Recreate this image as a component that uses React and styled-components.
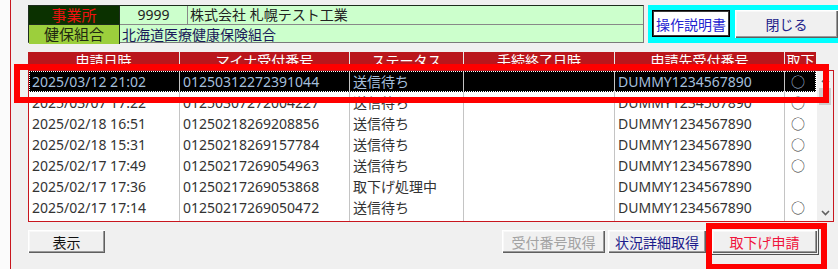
import React from "react";
import styled, { createGlobalStyle } from "styled-components";

const Global = createGlobalStyle`
  html, body { margin: 0; padding: 0; background: #f0f0f0; }
  * { box-sizing: border-box; }
`;

const FONT = `"Noto Sans", "Noto Sans CJK JP", sans-serif`;

const Root = styled.div`
  position: relative;
  width: 838px;
  height: 269px;
  overflow: hidden;
  display: flex;
  font-family: ${FONT};
  font-size: 14px;
`;

const Gutter = styled.div`
  width: 10px;
  background: #fbfbfb;
  flex: none;
`;

const Main = styled.div`
  flex: 1;
  border-left: 1px solid #c8161e;
  background: #f0f0f0;
  padding: 5px 0 0 17px;
  display: flex;
  flex-direction: column;
`;

const TopRow = styled.div`
  display: flex;
  height: 38px;
  gap: 4px;
`;

const InfoGrid = styled.div`
  width: 616px;
  display: grid;
  grid-template-columns: 91px 68px 1fr;
  grid-template-rows: 19px 19px;
  border: 1px solid #7a7a7a;
  border-left-color: #1d2d1d;
  border-top-color: #1d2d1d;
  background: #ccffcc;
`;

const Label = styled.div`
  background: ${(p) => p.$bg};
  color: ${(p) => p.$fg};
  border: 1px solid #1d2d1d;
  border-width: ${(p) => (p.$last ? "0 1px 0 0" : "0 1px 1px 0")};
  display: flex;
  align-items: center;
  justify-content: center;
  line-height: 1;
  font-size: 15px;
`;

const Cell = styled.div`
  color: ${(p) => p.$fg || "#222"};
  border-right: ${(p) => (p.$divider ? "1px solid #888" : "0")};
  border-bottom: ${(p) => (p.$bottom ? "1px solid #888" : "0")};
  display: flex;
  align-items: center;
  justify-content: ${(p) => (p.$center ? "center" : "flex-start")};
  padding-left: ${(p) => (p.$center ? "0" : "2px")};
  grid-column: ${(p) => p.$span || "auto"};
  line-height: 1;
  white-space: nowrap;
`;

const HelpPanel = styled.div`
  flex: 1;
  background: #00ffff;
  display: flex;
  align-items: flex-start;
  padding: 5px 0 0 4px;
  gap: 5px;
`;

const ManualButton = styled.div`
  width: 78px;
  height: 27px;
  background: #fff;
  border: 1px solid #000;
  box-shadow: inset 0 0 0 1px #3a3a3a;
  color: #2323d0;
  display: flex;
  align-items: center;
  justify-content: center;
  font-size: 14px;
`;

const Button3D = styled.div`
  width: ${(p) => p.$w}px;
  height: ${(p) => p.$h || 23}px;
  background: #f0f0f0;
  color: ${(p) => p.$fg || "#111"};
  display: flex;
  align-items: center;
  justify-content: center;
  font-size: 14px;
  box-shadow: inset 1px 1px 0 #ffffff, inset -1px -1px 0 #5f5f5f,
    inset -2px -2px 0 #9a9a9a, inset 2px 2px 0 #f8f8f8;
  margin-left: ${(p) => p.$ml || 0}px;
  outline: ${(p) => (p.$focus ? "1px solid #505050" : "none")};
  outline-offset: 1px;
  white-space: nowrap;
`;

const HeaderBar = styled.div`
  margin-top: 9px;
  width: 788px;
  height: 18px;
  background: #ba161c;
  display: flex;
`;

const HeadCell = styled.div`
  width: ${(p) => p.$w}px;
  flex: none;
  color: #fff;
  text-align: center;
  line-height: 18px;
  border-left: ${(p) => (p.$first ? "0" : "1px solid #e8e8e8")};
  white-space: nowrap;
  overflow: hidden;
`;

const ListBox = styled.div`
  width: 806px;
  height: 152px;
  border: 1px solid #c8161e;
  background: #fff;
  display: flex;
  overflow: hidden;
`;

const Rows = styled.div`
  width: 787px;
  flex: none;
  display: flex;
  flex-direction: column;
`;

const Row = styled.div`
  display: flex;
  height: 21px;
  flex: none;
  background: ${(p) => (p.$sel ? "#000" : "#fff")};
  color: ${(p) => (p.$sel ? "#a4bfdc" : "#333")};
  outline: ${(p) => (p.$sel ? "1px dotted #fff" : "none")};
  outline-offset: -1px;
`;

const RowCell = styled.div`
  width: ${(p) => p.$w}px;
  flex: none;
  border-left: ${(p) => (p.$first ? "0" : "1px solid #c4c4c4")};
  padding-left: ${(p) => (p.$mark ? 6 : 3)}px;
  line-height: 21px;
  white-space: nowrap;
  overflow: hidden;
`;

const ScrollBar = styled.div`
  width: 17px;
  flex: none;
  background: #f0f0f0;
  display: flex;
  flex-direction: column;
  justify-content: space-between;
  border-left: 1px solid #fff;
`;

const ScrollArrow = styled.div`
  height: 17px;
  display: flex;
  align-items: center;
  justify-content: center;
`;

const Thumb = styled.div`
  height: 17px;
  margin: 0 2px;
  background: #cdcdcd;
`;

const ScrollTrack = styled.div`
  flex: 1;
  display: flex;
  flex-direction: column;
`;

const ButtonBar = styled.div`
  margin-top: 8px;
  width: 806px;
  padding-right: 17px;
  display: flex;
  align-items: center;
`;

const Spacer = styled.div`
  flex: 1;
`;

const Mark = styled.div`
  position: absolute;
  left: ${(p) => p.$x}px;
  top: ${(p) => p.$y}px;
  width: ${(p) => p.$w}px;
  height: ${(p) => p.$h}px;
  border: 6px solid #ff0000;
  pointer-events: none;
`;

const COLS = [
  { t: "申請日時", w: 150 },
  { t: "マイナ受付番号", w: 170 },
  { t: "ステータス", w: 114 },
  { t: "手続終了日時", w: 151 },
  { t: "申請先受付番号", w: 170 },
  { t: "取下", w: 32 },
];

const DATA = [
  ["2025/03/12 21:02", "01250312272391044", "送信待ち", "", "DUMMY1234567890", "○"],
  ["2025/03/07 17:22", "01250307272004227", "送信待ち", "", "DUMMY1234567890", "○"],
  ["2025/02/18 16:51", "01250218269208856", "送信待ち", "", "DUMMY1234567890", "○"],
  ["2025/02/18 15:31", "01250218269157784", "送信待ち", "", "DUMMY1234567890", "○"],
  ["2025/02/17 17:49", "01250217269054963", "送信待ち", "", "DUMMY1234567890", "○"],
  ["2025/02/17 17:36", "01250217269053868", "取下げ処理中", "", "DUMMY1234567890", ""],
  ["2025/02/17 17:14", "01250217269050472", "送信待ち", "", "DUMMY1234567890", "○"],
  ["", "", "", "", "", ""],
];

const Chevron = ({ up }) => (
  <svg width="9" height="6" viewBox="0 0 9 6">
    <path
      d={up ? "M1 5 L4.5 1.5 L8 5" : "M1 1 L4.5 4.5 L8 1"}
      fill="none"
      stroke="#606060"
      strokeWidth="1.6"
    />
  </svg>
);

export default function App() {
  return (
    <Root>
      <Global />
      <Gutter />
      <Main>
        <TopRow>
          <InfoGrid>
            <Label $bg="#0b3100" $fg="#ee1111">事業所</Label>
            <Cell $center $divider $bottom>9999</Cell>
            <Cell $bottom>株式会社 札幌テスト工業</Cell>
            <Label $bg="#9ccf3c" $fg="#1f2a10" $last>健保組合</Label>
            <Cell $span="span 2" $fg="#1a1a5a">北海道医療健康保険組合</Cell>
          </InfoGrid>
          <HelpPanel>
            <ManualButton>操作説明書</ManualButton>
            <Button3D $w={103} $h={28} $fg="#22228a">閉じる</Button3D>
          </HelpPanel>
        </TopRow>
        <HeaderBar>
          {COLS.map((c, i) => (
            <HeadCell key={c.t} $w={i === 0 ? 151 : c.w} $first={i === 0}>
              {c.t}
            </HeadCell>
          ))}
        </HeaderBar>
        <ListBox>
          <Rows>
            {DATA.map((r, ri) => (
              <Row key={ri} $sel={ri === 0}>
                {r.map((v, ci) => (
                  <RowCell
                    key={ci}
                    $w={COLS[ci].w}
                    $first={ci === 0}
                    $mark={ci === 5}
                  >
                    {v}
                  </RowCell>
                ))}
              </Row>
            ))}
          </Rows>
          <ScrollBar>
            <ScrollTrack>
              <ScrollArrow>
                <Chevron up />
              </ScrollArrow>
              <Thumb />
            </ScrollTrack>
            <ScrollArrow>
              <Chevron />
            </ScrollArrow>
          </ScrollBar>
        </ListBox>
        <ButtonBar>
          <Button3D $w={77}>表示</Button3D>
          <Spacer />
          <Button3D $w={103} $fg="#a3a3a3">受付番号取得</Button3D>
          <Button3D $w={98} $ml={3} $fg="#1c1c8c">状況詳細取得</Button3D>
          <Button3D $w={105} $ml={6} $fg="#f0143c" $focus>取下げ申請</Button3D>
        </ButtonBar>
      </Main>
      <Mark $x={14} $y={64} $w={815} $h={39} />
      <Mark $x={706} $y={223} $w={121} $h={47} />
    </Root>
  );
}
